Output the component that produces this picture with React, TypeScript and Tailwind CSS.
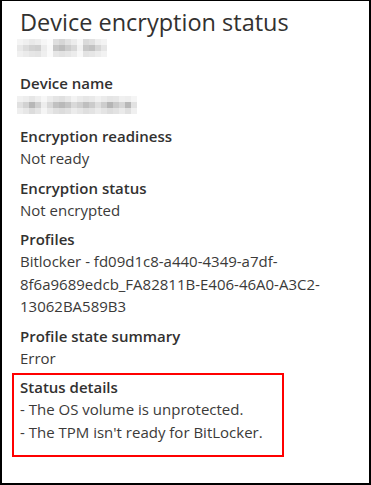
import React from "react";

type Field = {
  label: string;
  lines?: string[];
};

// pixelated placeholder (redacted text)
const subtitleCells = [
  ["#f4f4f4", "#efefef", "#e9e9e9", "#ededed", "#f6f6f6", "#fbfbfb", "#dedede", "#d6d6d6", "#e2e2e2", "#ececec", "#f7f7f7", "#dadada", "#e0e0e0", "#eeeeee", "#f3f3f3"],
  ["#e8e8e8", "#dcdcdc", "#d2d2d2", "#cfcfcf", "#ececec", "#f9f9f9", "#c6c6c6", "#bdbdbd", "#cccccc", "#d8d8d8", "#f2f2f2", "#c8c8c8", "#c2c2c2", "#d6d6d6", "#e6e6e6"],
  ["#f0f0f0", "#ebebeb", "#e6e6e6", "#e4e4e4", "#efefef", "#fafafa", "#e6e6e6", "#e2e2e2", "#e6e6e6", "#ececec", "#f8f8f8", "#e3e3e3", "#e6e6e6", "#ececec", "#f2f2f2"],
];

const nameCells = [
  ["#f1f1f1", "#ededed", "#e6e6e6", "#eeeeee", "#f7f7f7", "#ececec", "#e4e4e4", "#e0e0e0", "#e8e8e8", "#f3f3f3", "#ebebeb", "#e6e6e6", "#e9e9e9", "#f1f1f1", "#ebebeb", "#e5e5e5", "#e7e7e7", "#f0f0f0", "#eeeeee", "#f5f5f5"],
  ["#e0e0e0", "#d2d2d2", "#b7b7b7", "#cfcfcf", "#ededed", "#d8d8d8", "#c1c1c1", "#b9b9b9", "#c4c4c4", "#d9d9d9", "#cfcfcf", "#bfbfbf", "#cbcbcb", "#dedede", "#cdcdcd", "#b5b5b5", "#c9c9c9", "#d6d6d6", "#b8b8b8", "#e2e2e2"],
  ["#eeeeee", "#e7e7e7", "#dcdcdc", "#e5e5e5", "#f5f5f5", "#e9e9e9", "#e0e0e0", "#dcdcdc", "#e1e1e1", "#ececec", "#e6e6e6", "#dfdfdf", "#e3e3e3", "#ebebeb", "#e4e4e4", "#dddddd", "#e2e2e2", "#eaeaea", "#e0e0e0", "#f0f0f0"],
];

const Redacted = ({ cells }: { cells: string[][] }) => (
  <div className="flex flex-col">
    {cells.map((row, r) => (
      <div key={r} className="flex">
        {row.map((c, i) => (
          <div key={i} className="h-[6px] w-[6px]" style={{ backgroundColor: c }} />
        ))}
      </div>
    ))}
  </div>
);

const fields: Field[] = [
  { label: "Encryption readiness", lines: ["Not ready"] },
  { label: "Encryption status", lines: ["Not encrypted"] },
  {
    label: "Profiles",
    lines: [
      "Bitlocker - fd09d1c8-a440-4349-a7df-",
      "8f6a9689edcb_FA82811B-E406-46A0-A3C2-",
      "13062BA589B3",
    ],
  },
  { label: "Profile state summary", lines: ["Error"] },
];

const FieldBlock = ({ field }: { field: Field }) => (
  <div className="flex flex-col">
    <div className="font-semibold leading-[22px] text-[#323130]">{field.label}</div>
    {field.lines?.map((line, i) => (
      <div key={i} className="leading-[22.5px] text-[#3b3a39]">
        {line}
      </div>
    ))}
  </div>
);

const App = () => {
  return (
    <div className="h-[485px] w-[371px] overflow-hidden bg-white font-['Open_Sans',sans-serif] text-[15px]">
      <div className="h-full w-full border-2 border-t border-black px-[18px] pt-[5px]">
        <h1 className="text-[23.5px] leading-[32px] text-[#323130]">Device encryption status</h1>
        <div className="mt-[1px] ml-[-3px]">
          <Redacted cells={subtitleCells} />
        </div>

        <div className="mt-[15px] flex flex-col">
          <div className="font-semibold leading-[22px] text-[#323130]">Device name</div>
          <div className="mt-[2px] ml-[-3px]">
            <Redacted cells={nameCells} />
          </div>
        </div>

        <div className="mt-[11px] flex flex-col gap-[7px]">
          {fields.map((f) => (
            <FieldBlock key={f.label} field={f} />
          ))}
        </div>

        <div className="ml-[-8px] mt-[4px] w-[272px] border-2 border-[#ff0000] px-[6px] pt-[1px] pb-[12px]">
          <div className="font-semibold leading-[22px] text-[#323130]">Status details</div>
          <div className="leading-[22.5px] text-[#3b3a39]">- The OS volume is unprotected.</div>
          <div className="leading-[22.5px] text-[#3b3a39]">- The TPM isn't ready for BitLocker.</div>
        </div>
      </div>
    </div>
  );
};

export default App;
